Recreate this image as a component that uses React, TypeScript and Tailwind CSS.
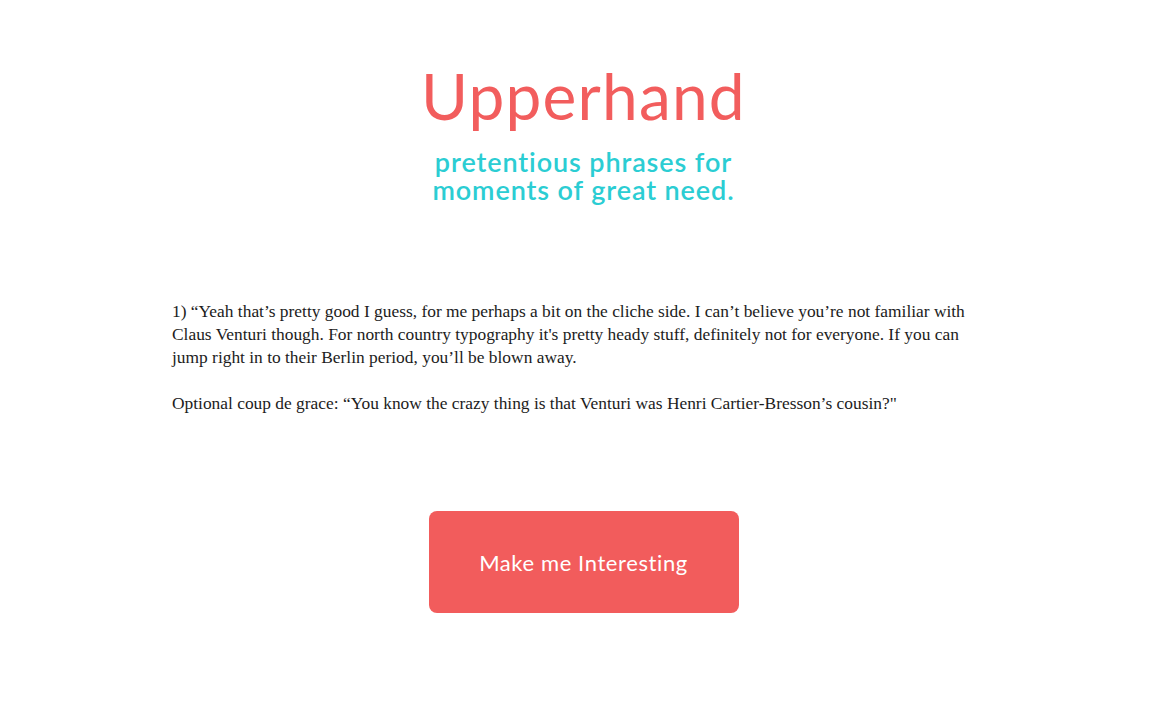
export default function App() {
  return (
    <div className="min-h-screen bg-white flex flex-col items-center">
      <h1 className="mt-[60px] font-['Lato','Noto_Sans',sans-serif] text-[64px] leading-[72px] text-[#f25d5d] font-normal tracking-[1.2px]">
        Upperhand
      </h1>
      <p className="mt-[16px] font-['Lato','Noto_Sans',sans-serif] text-[27px] leading-[28px] tracking-[0.9px] text-[#2bcdd3] text-center font-semibold">
        pretentious phrases for
        <br />
        moments of great need.
      </p>
      <div className="mt-[96px] w-[823px] font-['Liberation_Serif','DejaVu_Serif',serif] text-[17.4px] leading-[23px] text-[#1c1c1c]">
        <p>
          1) “Yeah that’s pretty good I guess, for me perhaps a bit on the cliche side. I can’t believe you’re not familiar with
          <br />
          Claus Venturi though. For north country typography it's pretty heady stuff, definitely not for everyone. If you can
          <br />
          jump right in to their Berlin period, you’ll be blown away.
        </p>
        <p className="mt-[23px]">
          Optional coup de grace: “You know the crazy thing is that Venturi was Henri Cartier-Bresson’s cousin?"
        </p>
      </div>
      <button className="mt-[96px] w-[310px] h-[102px] rounded-[8px] bg-[#f25c5c] text-white font-['Lato','Noto_Sans',sans-serif] text-[22px] tracking-[0.6px]">
        Make me Interesting
      </button>
    </div>
  );
}
